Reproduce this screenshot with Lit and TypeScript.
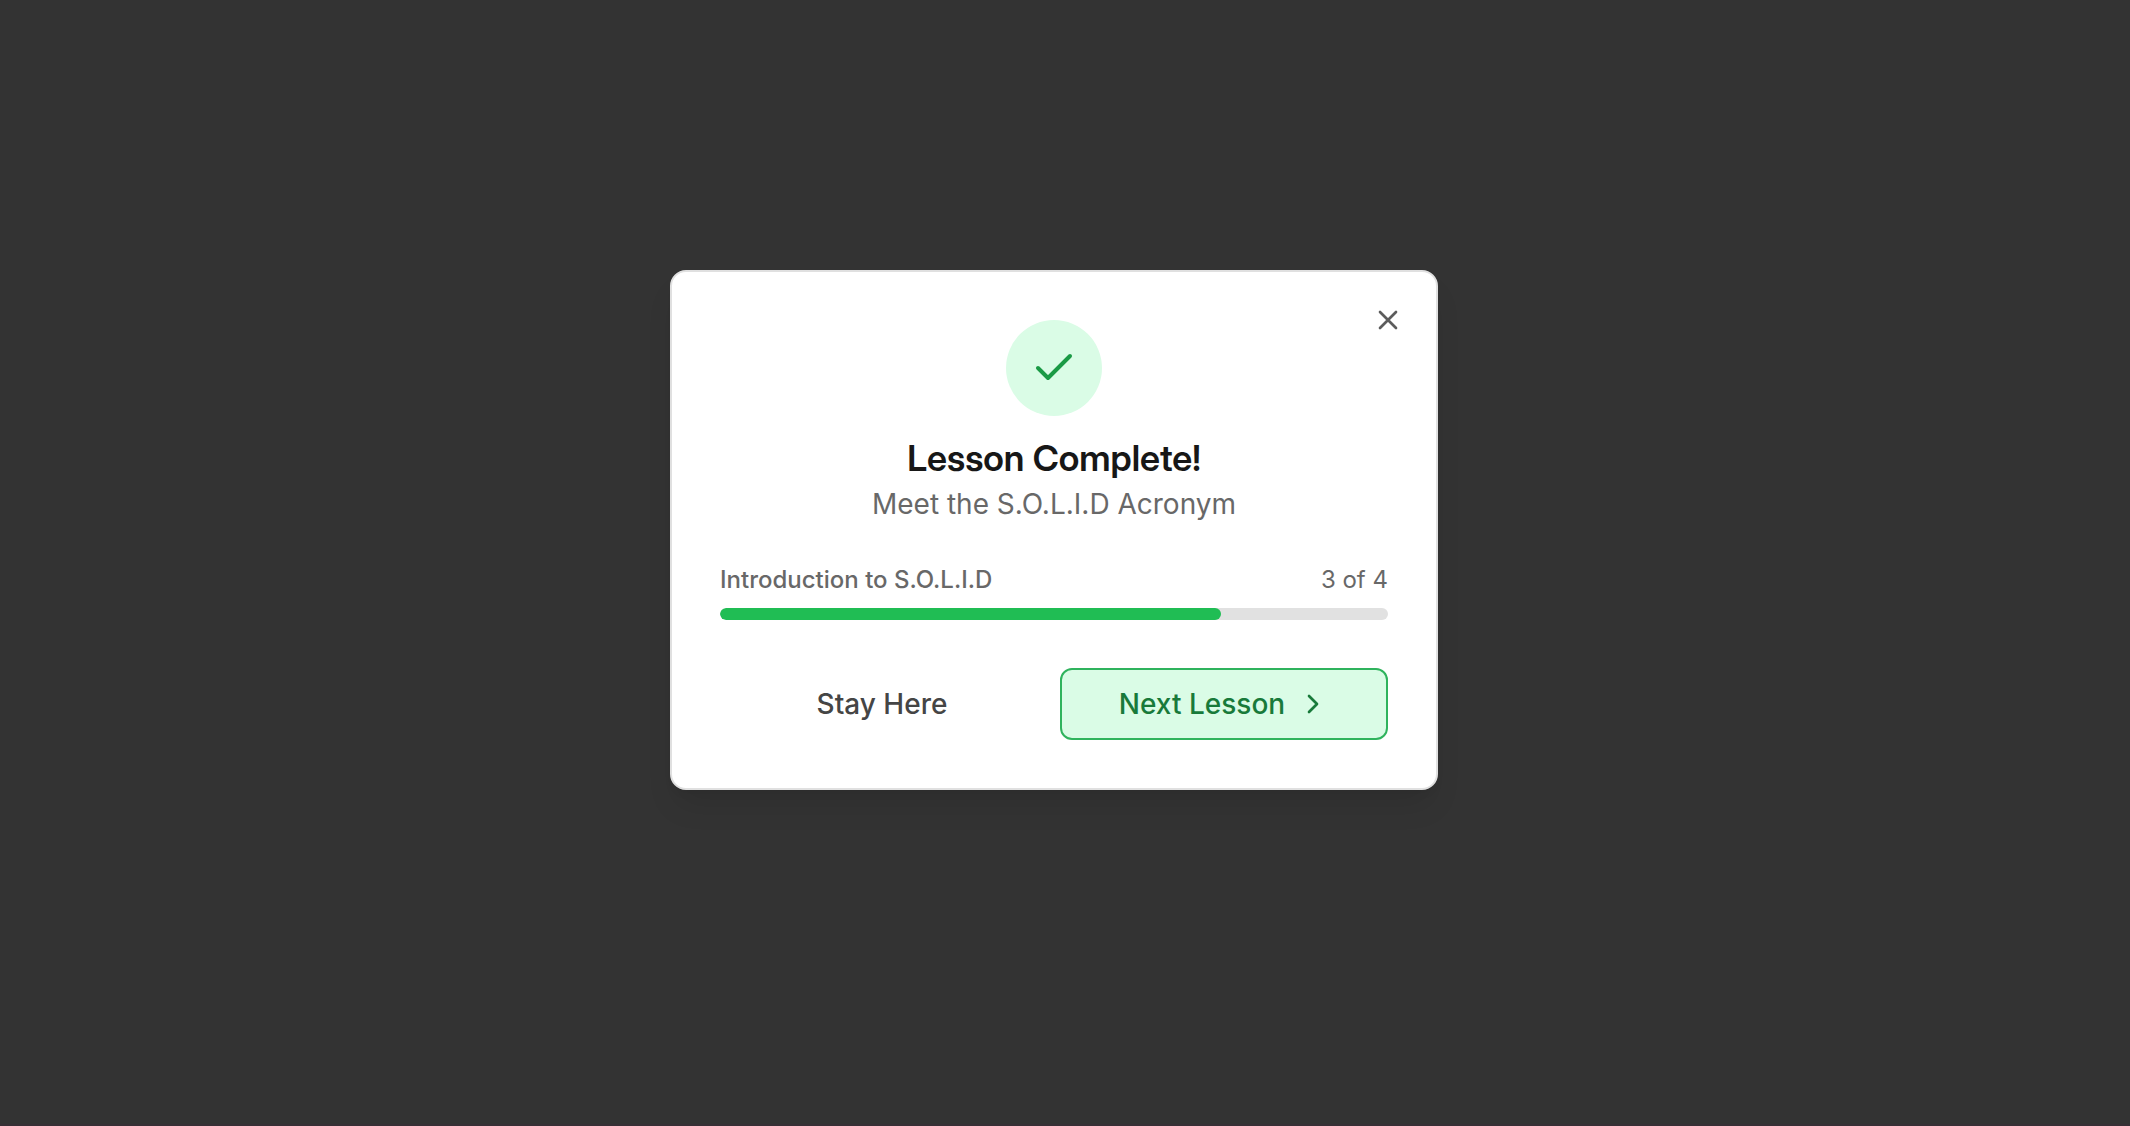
import { LitElement, html, css } from "lit";
import { customElement, property } from "lit/decorators.js";

@customElement("app-root")
export class AppRoot extends LitElement {
  @property({ type: Number }) completed = 3;
  @property({ type: Number }) total = 4;

  static styles = css`
    :host {
      display: block;
      font-family: Inter, "Liberation Sans", sans-serif;
      -webkit-font-smoothing: antialiased;
    }
    *,
    *::before,
    *::after {
      box-sizing: border-box;
    }
    .backdrop {
      display: flex;
      align-items: center;
      justify-content: center;
      min-height: 100vh;
      padding: 0 22px 64px 0;
      background: #333333;
      border-bottom: 2px solid #372f35;
    }
    .dialog {
      position: relative;
      width: 100%;
      max-width: 768px;
      padding: 48px;
      border: 2px solid #e0e0e0;
      border-radius: 16px;
      background: #ffffff;
      box-shadow: 0 20px 30px -6px rgb(0 0 0 / 0.1), 0 8px 12px -8px rgb(0 0 0 / 0.1);
    }
    svg {
      display: block;
      flex: none;
      fill: none;
      stroke: currentColor;
      stroke-width: 2;
      stroke-linecap: round;
      stroke-linejoin: round;
    }
    button {
      margin: 0;
      font: inherit;
      cursor: pointer;
    }
    .close {
      position: absolute;
      top: 32px;
      right: 32px;
      padding: 0;
      border: 0;
      background: none;
      color: #5c5c5c;
    }
    .icon {
      width: 32px;
      height: 32px;
    }
    .header {
      display: flex;
      flex-direction: column;
      align-items: center;
      text-align: center;
    }
    .badge {
      display: grid;
      place-items: center;
      width: 96px;
      height: 96px;
      margin-bottom: 16px;
      border-radius: 50%;
      background: #dafce6;
      color: #1a9a45;
    }
    .check {
      width: 48px;
      height: 48px;
    }
    .title {
      margin: 0;
      font-family: "Inter Display", Inter, "Liberation Sans", sans-serif;
      font-size: 36px;
      line-height: 52px;
      font-weight: 600;
      color: #171717;
    }
    .subtitle {
      margin: 0;
      font-size: 28px;
      line-height: 40px;
      color: #686868;
    }
    .progress {
      margin-top: 40px;
    }
    .labels {
      display: flex;
      justify-content: space-between;
      margin-bottom: 12px;
      font-size: 24px;
      line-height: 32px;
      color: #686868;
    }
    .course {
      font-weight: 500;
    }
    .track {
      height: 12px;
      border-radius: 6px;
      background: #e1e1e1;
      overflow: hidden;
    }
    .fill {
      height: 100%;
      border-radius: 6px;
      background: #20bd54;
    }
    .actions {
      display: flex;
      gap: 16px;
      margin-top: 48px;
    }
    .action {
      display: flex;
      flex: 1 1 0;
      align-items: center;
      justify-content: center;
      gap: 12px;
      height: 72px;
      padding: 0 32px;
      border: 0;
      border-radius: 12px;
      background: none;
      font-size: 28px;
      line-height: 40px;
      font-weight: 500;
      color: #454545;
      white-space: nowrap;
    }
    .next {
      border: 2px solid #2fb35d;
      background: #dafce6;
      color: #187a3a;
    }
  `;

  render() {
    const percent = (this.completed / this.total) * 100;
    return html`
      <div class="backdrop">
        <section class="dialog" role="dialog" aria-modal="true" aria-labelledby="title" aria-describedby="subtitle">
          <header class="header">
            <div class="badge">
              <svg class="check" viewBox="0 0 24 24" aria-hidden="true"><path d="M20 6 9 17l-5-5" /></svg>
            </div>
            <h2 class="title" id="title">Lesson Complete!</h2>
            <p class="subtitle" id="subtitle">Meet the S.O.L.I.D Acronym</p>
          </header>
          <div class="progress">
            <div class="labels">
              <span class="course" id="course">Introduction to S.O.L.I.D</span>
              <span>${this.completed} of ${this.total}</span>
            </div>
            <div
              class="track"
              role="progressbar"
              aria-labelledby="course"
              aria-valuemin="0"
              aria-valuemax=${this.total}
              aria-valuenow=${this.completed}
            >
              <div class="fill" style="width: ${percent}%"></div>
            </div>
          </div>
          <div class="actions">
            <button class="action" type="button">Stay Here</button>
            <button class="action next" type="button">
              Next Lesson
              <svg class="icon" viewBox="0 0 24 24" aria-hidden="true"><path d="m9 18 6-6-6-6" /></svg>
            </button>
          </div>
          <button class="close" type="button" aria-label="Close">
            <svg class="icon" viewBox="0 0 24 24" aria-hidden="true"><path d="M18 6 6 18M6 6l12 12" /></svg>
          </button>
        </section>
      </div>
    `;
  }
}
